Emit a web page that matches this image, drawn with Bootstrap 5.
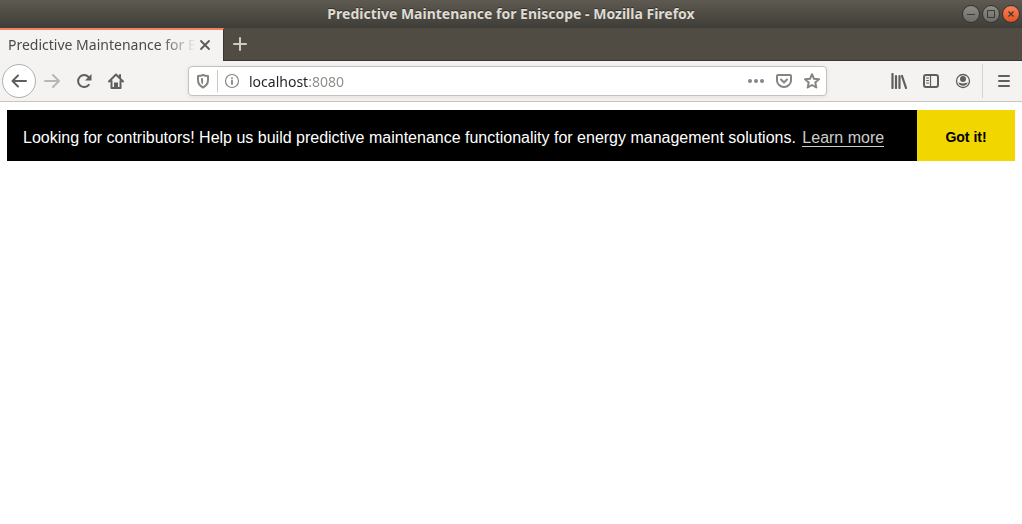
<!DOCTYPE html>
<html lang="en">
<head>
<meta charset="utf-8">
<meta name="viewport" content="width=device-width, initial-scale=1">
<title>Predictive Maintenance for Eniscope</title>
<link href="https://cdn.jsdelivr.net/npm/bootstrap@5.3.0/dist/css/bootstrap.min.css" rel="stylesheet">
<style>
  body { font-family: "Noto Sans", "Open Sans", sans-serif; font-size: 14px; line-height: 20px; color: #4a4a4a; background: #fff; }
  svg { display: block; fill: none; stroke: currentColor; stroke-width: 2; stroke-linecap: round; stroke-linejoin: round; }
  .plain { padding: 0; border: 0; background: none; color: inherit; display: flex; align-items: center; justify-content: center; }

  .titlebar { height: 28px; padding: 0 1px; background: linear-gradient(#5e5a51, #3f3d38); }
  .titlebar h1 { font-size: 14px; line-height: 28px; font-weight: 700; color: #dfdbd2; text-shadow: 0 -1px 0 #33322e; }
  .winbtns { width: 60px; gap: 2px; padding-left: 1px; }
  .winbtn { width: 18px; height: 18px; border: 1px solid #34332f; border-radius: 50%; color: #3a3935; background: linear-gradient(#8e8c85, #6e6c66); }
  .winbtn svg { stroke-width: 1; stroke-linecap: butt; stroke-linejoin: miter; }
  .winbtn.quit { background: linear-gradient(#f8815a, #e6521f); }

  .tabstrip { height: 33px; background: #504c44; border-bottom: 1px solid #38352f; }
  .page-tab { width: 224px; height: 33px; padding: 0 8px 2px; background: #f4f3f1; border-top: 2px solid #f0845c; border-right: 1px solid #38352f; }
  .tab-title { width: 188px; white-space: nowrap; overflow: hidden; -webkit-mask-image: linear-gradient(to right, #000 152px, transparent 188px); mask-image: linear-gradient(to right, #000 152px, transparent 188px); }
  .tab-close { width: 20px; height: 20px; color: #5a5a58; }
  .new-tab { width: 32px; height: 32px; color: #d0ccc4; }

  .toolbar { height: 41px; padding: 0 2px; background: #f4f3f1; border-bottom: 1px solid #c9c4be; color: #5f5f5d; }
  .back { width: 34px; height: 34px; background: #fff; border: 1px solid #b1afab; border-radius: 50%; }
  .tool { width: 32px; height: 32px; }
  .tool:disabled { color: #b8b7b5; }
  .urlbar { height: 30px; margin: 0 56px; padding-left: 4px; background: #fff; border: 1px solid #c7c1ba; border-radius: 4px; box-shadow: 0 1px 4px rgba(0,0,0,.08); color: #858583; }
  .urlbar .plain { width: 28px; height: 28px; }
  .urlbar .shield { width: 20px; }
  .urlbar .rule { width: 1px; height: 22px; margin-left: 4px; background: #c9c8c6; }
  .address { border: 0; outline: 0; padding: 0 0 0 3px; min-width: 0; height: 24px; font-size: 14px; color: #222;
    background: linear-gradient(to right, #222 62px, #8c8c8a 62px); -webkit-background-clip: text; background-clip: text; -webkit-text-fill-color: transparent; }
  .menu-rule { width: 1px; height: 34px; margin: 0 5px 0 3px; background: #d5d3d0; }

  .notice { margin: 8px 7px; min-height: 51px; background: #000; color: #fff; font-family: "Liberation Sans", Arial, sans-serif; font-size: 16px; line-height: 24px; }
  .notice-text { padding: 16px 16px 11px; }
  .notice a { margin-left: 2px; color: #ccc; text-decoration: none; border-bottom: 1px solid #ccc; line-height: 16px; display: inline-block; }
  .got-it { width: 98px; padding: 2px 0 0; border: 0; background: #f1d600; color: #000; font-size: 14px; font-weight: 700; }
</style>
</head>
<body>
<header>
  <div class="titlebar d-flex align-items-center">
    <div class="winbtns"></div>
    <h1 class="flex-fill text-center m-0">Predictive Maintenance for Eniscope - Mozilla Firefox</h1>
    <div class="winbtns d-flex">
      <button class="plain winbtn" aria-label="Minimize"><svg width="16" height="16"><path d="M4 8.500h8"/></svg></button>
      <button class="plain winbtn" aria-label="Maximize"><svg width="16" height="16"><path d="M4.500 4.500h7v7h-7z"/></svg></button>
      <button class="plain winbtn quit" aria-label="Close window"><svg width="16" height="16"><path d="M5.500 5.500l5 5M10.500 5.500l-5 5" stroke-width="1.300"/></svg></button>
    </div>
  </div>
  <div class="tabstrip d-flex">
    <div class="page-tab d-flex align-items-center">
      <div class="tab-title">Predictive Maintenance for Eniscope</div>
      <button class="plain tab-close flex-shrink-0" aria-label="Close tab"><svg width="16" height="16"><path d="M4 4l8 8M12 4l-8 8" stroke-width="1.800"/></svg></button>
    </div>
    <button class="plain new-tab" aria-label="New tab"><svg width="16" height="16"><path d="M8 2v12M2 8h12"/></svg></button>
  </div>
  <nav class="toolbar d-flex align-items-center" aria-label="Browser toolbar">
    <button class="plain back" aria-label="Back"><svg width="18" height="18"><path d="M16 9H2.500M8 3.500L2.500 9 8 14.500"/></svg></button>
    <button class="plain tool" disabled aria-label="Forward"><svg width="16" height="16"><path d="M1 8h14M9 2l6 6-6 6"/></svg></button>
    <button class="plain tool" aria-label="Reload"><svg width="16" height="16"><path d="M12.800 11.800A6 6 0 1 1 12.500 4l1 1"/><path d="M15.500 1v6.500H9z" fill="currentColor" stroke="none"/></svg></button>
    <button class="plain tool" aria-label="Home"><svg width="16" height="16"><path d="M1 8.500L8 1.500l7 7M3.500 8v7h9V8"/><path d="M6 15V9.500h4V15z" fill="currentColor" stroke="none"/><path d="M12 2v3"/></svg></button>
    <div class="urlbar d-flex align-items-center flex-fill">
      <button class="plain shield" aria-label="Tracking protection"><svg width="16" height="16"><path d="M8 2c2 1 3.500 1 5 1v4c0 4-2 6-5 7.500C5 13 3 11 3 7V3c1.500 0 3 0 5-1z"/><path d="M8 5v6.500C6.500 10.500 6 9 6 7V5.300z" fill="currentColor" stroke="none"/></svg></button>
      <span class="rule"></span>
      <button class="plain" aria-label="Site information"><svg width="16" height="16"><circle cx="8" cy="8" r="6.500" stroke-width="1.200"/><path d="M8 7.500v3.500M8 5v0" stroke-width="1.800"/></svg></button>
      <input class="address flex-fill" type="text" value="localhost:8080" aria-label="Address" spellcheck="false">
      <button class="plain" aria-label="Page actions"><svg width="18" height="16"><g fill="currentColor" stroke="none"><circle cx="3" cy="8" r="2"/><circle cx="9" cy="8" r="2"/><circle cx="15" cy="8" r="2"/></g></svg></button>
      <button class="plain" aria-label="Save to Pocket"><svg width="16" height="16"><path d="M2 2h12q1 0 1 1v4.500a7 6.500 0 0 1-14 0V3q0-1 1-1zM5 6.500l3 3 3-3"/></svg></button>
      <button class="plain" aria-label="Bookmark this page"><svg width="16" height="16"><path d="M8 1.200l2 4.600 5 .5-3.700 3.300 1 4.900L8 12l-4.300 2.500 1-4.900L1 6.300l5-.5z"/></svg></button>
    </div>
    <button class="plain tool" aria-label="Library"><svg width="16" height="16"><path d="M1.500 1v14M5 3v12M8.500 3v12M11 3l4 12" stroke-width="2.200"/></svg></button>
    <button class="plain tool" aria-label="Sidebars"><svg width="16" height="16"><rect x="1" y="2" width="14" height="12" rx="2"/><path d="M7.500 2v12M3.500 5h2M3.500 7.500h2M3.500 10h2" stroke-width="1.200"/></svg></button>
    <button class="plain tool" aria-label="Account"><svg width="16" height="16"><circle cx="8" cy="8" r="6.500" stroke-width="1.300"/><g fill="currentColor" stroke="none"><circle cx="8" cy="5.900" r="3"/><path d="M3.300 9.500c1.500 0 2.500 1 4.700 1s3.200-1 4.700-1a5 5 0 0 1-9.400 0z"/></g></svg></button>
    <span class="menu-rule"></span>
    <button class="plain tool" aria-label="Open menu"><svg width="16" height="16"><path d="M3 3h10M3 8h10M3 13h10"/></svg></button>
  </nav>
</header>
<main>
  <div class="notice d-flex" role="dialog" aria-label="Contributor notice">
    <div class="notice-text flex-fill">Looking for contributors! Help us build predictive maintenance functionality for energy management solutions. <a href="#">Learn more</a></div>
    <button class="got-it flex-shrink-0">Got it!</button>
  </div>
</main>
<script src="https://cdn.jsdelivr.net/npm/bootstrap@5.3.0/dist/js/bootstrap.bundle.min.js"></script>
</body>
</html>
